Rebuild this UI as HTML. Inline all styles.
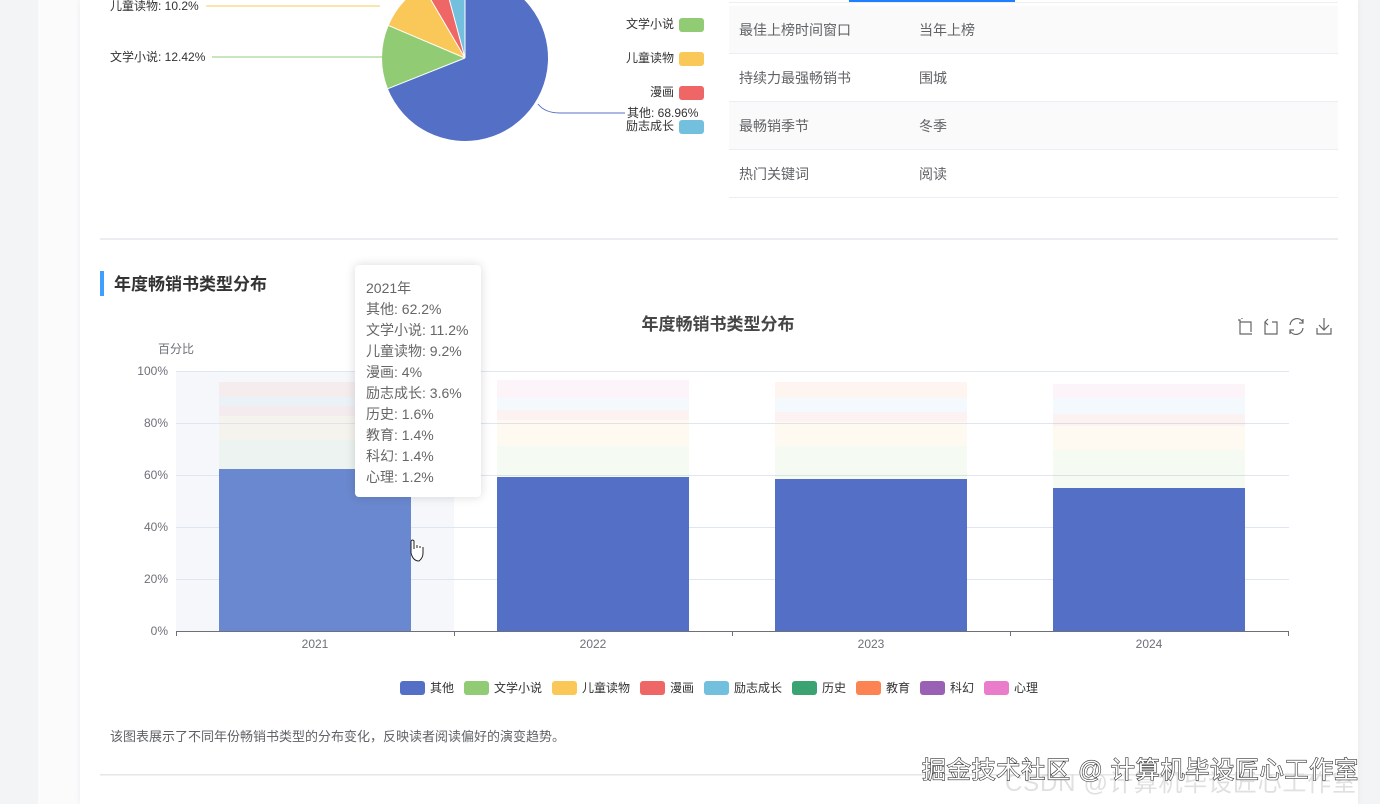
<!DOCTYPE html>
<html><head><meta charset="utf-8"><style>
html,body{margin:0;padding:0;width:1380px;height:804px;overflow:hidden;background:#f3f4f6;font-family:"Liberation Sans","Noto Sans CJK SC",sans-serif;}
.wrap{position:absolute;left:38px;top:0;width:1320px;height:804px;background:#fbfbfc;}
.card{position:absolute;left:80px;top:0;width:1278px;height:804px;background:#fff;box-shadow:0 0 6px rgba(0,0,0,.06);}
.tip{position:absolute;left:355px;top:265px;width:126px;height:232px;background:#fff;border-radius:4px;box-shadow:0 0 10px rgba(0,0,0,.15);box-sizing:border-box;padding:13px 0 0 11px;font-size:14px;line-height:21px;color:#666;}
</style></head><body>
<div class="wrap"></div>
<div class="card"></div>
<svg width="1380" height="804" style="position:absolute;left:0;top:0" font-family="Liberation Sans, Noto Sans CJK SC, sans-serif">
<path d="M465,58 L465,-25 A83,83 0 1,1 387.9,88.7 Z" fill="#5470c6"/>
<path d="M465,58 L387.9,88.7 A83,83 0 0,1 388.6,25.6 Z" fill="#91cc75"/>
<path d="M465,58 L388.6,25.6 A83,83 0 0,1 423,-13.6 Z" fill="#fac858"/>
<path d="M465,58 L423,-13.6 A83,83 0 0,1 443.5,-22 Z" fill="#ee6666"/>
<path d="M465,58 L443.5,-22 A83,83 0 0,1 465,-25 Z" fill="#73c0de"/>
<path d="M465,58 L465,-25 M465,58 L387.9,88.7 M465,58 L388.6,25.6 M465,58 L423,-13.6 M465,58 L443.5,-22" stroke="#fff" stroke-width="1"/>
<path d="M206,6 L380,6" stroke="#fac858" fill="none"/>
<path d="M212,57 L383,57" stroke="#91cc75" fill="none"/>
<path d="M538,104 Q545,113 560,113 L625,113" stroke="#5470c6" fill="none"/>
<g font-size="12" fill="#333">
<text x="110" y="10">儿童读物: 10.2%</text>
<text x="110" y="61">文学小说: 12.42%</text>
<text x="627" y="117">其他: 68.96%</text>
<text x="674" y="28" text-anchor="end">文学小说</text>
<text x="674" y="62" text-anchor="end">儿童读物</text>
<text x="674" y="96" text-anchor="end">漫画</text>
<text x="674" y="130" text-anchor="end">励志成长</text>
</g>
<rect x="679" y="18" width="25" height="14" rx="3" fill="#91cc75"/>
<rect x="679" y="52" width="25" height="14" rx="3" fill="#fac858"/>
<rect x="679" y="86" width="25" height="14" rx="3" fill="#ee6666"/>
<rect x="679" y="120" width="25" height="14" rx="3" fill="#73c0de"/>
<rect x="849" y="0" width="166" height="2" fill="#1e80ff"/>
<rect x="729" y="2" width="609" height="1" fill="#eee"/>
<rect x="729" y="6" width="609" height="48" fill="#fafafa"/>
<rect x="729" y="102" width="609" height="48" fill="#fafafa"/>
<g fill="#ebeef5"><rect x="729" y="53" width="609" height="1"/><rect x="729" y="101" width="609" height="1"/><rect x="729" y="149" width="609" height="1"/><rect x="729" y="197" width="609" height="1"/></g>
<g font-size="14" fill="#606266">
<text x="739" y="35">最佳上榜时间窗口</text><text x="919" y="35">当年上榜</text>
<text x="739" y="83">持续力最强畅销书</text><text x="919" y="83">围城</text>
<text x="739" y="131">最畅销季节</text><text x="919" y="131">冬季</text>
<text x="739" y="179">热门关键词</text><text x="919" y="179">阅读</text>
</g>
<rect x="100" y="238" width="1238" height="2" fill="#ebedf0"/>
<rect x="100" y="271" width="4" height="25" fill="#409eff"/>
<text x="114" y="290" font-size="17" font-weight="bold" fill="#333">年度畅销书类型分布</text>
<text x="718" y="330" font-size="17" font-weight="bold" fill="#464646" text-anchor="middle">年度畅销书类型分布</text>
<text x="158" y="353" font-size="12" fill="#6e7079">百分比</text>
<g stroke="#666" fill="none" stroke-width="1.2">
<path d="M1238,320 L1240,320 L1240,334 L1252,334 M1240,322 L1251,322 L1251,332 M1242,319 L1242,318"/>
<path d="M1265,322 L1265,334 L1277,334 L1277,322 L1272,322 M1268,319 L1265,322 L1268,325"/>
<path d="M1303,322 A7,7 0 0,0 1290,325 M1290,331 A7,7 0 0,0 1303,328 M1303,319 L1303,323 L1299,323 M1290,334 L1290,330 L1294,330"/>
<path d="M1324,318 L1324,330 M1319,325 L1324,330 L1329,325 M1317,328 L1317,334 L1331,334 L1331,328"/>
</g>
<rect x="176" y="371" width="278" height="260" fill="#eef1f8" opacity=".6"/>
<g fill="#e0e6f1"><rect x="176" y="371" width="1113" height="1"/><rect x="176" y="423" width="1113" height="1"/><rect x="176" y="475" width="1113" height="1"/><rect x="176" y="527" width="1113" height="1"/><rect x="176" y="579" width="1113" height="1"/></g>
<g font-size="12" fill="#6e7079" text-anchor="end">
<text x="168" y="375">100%</text><text x="168" y="427">80%</text><text x="168" y="479">60%</text><text x="168" y="531">40%</text><text x="168" y="583">20%</text><text x="168" y="635">0%</text>
</g>
<g opacity=".08">
<rect x="219" y="440" width="192" height="29" fill="#91cc75"/><rect x="219" y="416" width="192" height="24" fill="#fac858"/><rect x="219" y="406" width="192" height="10" fill="#ee6666"/><rect x="219" y="397" width="192" height="9" fill="#73c0de"/><rect x="219" y="382" width="192" height="15" fill="#fc8452"/>
<rect x="497" y="446" width="192" height="31" fill="#91cc75"/><rect x="497" y="420" width="192" height="26" fill="#fac858"/><rect x="497" y="410" width="192" height="10" fill="#ee6666"/><rect x="497" y="398" width="192" height="12" fill="#73c0de"/><rect x="497" y="380" width="192" height="18" fill="#ea7ccc"/>
<rect x="775" y="446" width="192" height="33" fill="#91cc75"/><rect x="775" y="422" width="192" height="24" fill="#fac858"/><rect x="775" y="412" width="192" height="10" fill="#ee6666"/><rect x="775" y="398" width="192" height="14" fill="#73c0de"/><rect x="775" y="382" width="192" height="16" fill="#fc8452"/>
<rect x="1053" y="450" width="192" height="38" fill="#91cc75"/><rect x="1053" y="426" width="192" height="24" fill="#fac858"/><rect x="1053" y="414" width="192" height="12" fill="#ee6666"/><rect x="1053" y="398" width="192" height="16" fill="#73c0de"/><rect x="1053" y="384" width="192" height="14" fill="#ea7ccc"/>
</g>
<rect x="219" y="469" width="192" height="162" fill="#6a88cf"/>
<rect x="497" y="477" width="192" height="154" fill="#5470c6"/>
<rect x="775" y="479" width="192" height="152" fill="#5470c6"/>
<rect x="1053" y="488" width="192" height="143" fill="#5470c6"/>
<g stroke="#6e7079"><path d="M176,631.5 L1289,631.5 M176.5,631 L176.5,636 M454.5,631 L454.5,636 M732.5,631 L732.5,636 M1010.5,631 L1010.5,636 M1288.5,631 L1288.5,636"/></g>
<g font-size="12" fill="#6e7079" text-anchor="middle"><text x="315" y="648">2021</text><text x="593" y="648">2022</text><text x="871" y="648">2023</text><text x="1149" y="648">2024</text></g>
<path d="M411,541 L411,553 Q413,561 419,561 Q423,558 423,553 L423,547 M414,549 L414,541 Q412.5,539 411,541 M417,548 L417,545 M420,548 L420,546" stroke="#222" fill="#fff" stroke-width="1"/>
<g font-size="12" fill="#333">
<rect x="400" y="681" width="25" height="14" rx="3" fill="#5470c6"/><text x="430" y="692">其他</text>
<rect x="464" y="681" width="25" height="14" rx="3" fill="#91cc75"/><text x="494" y="692">文学小说</text>
<rect x="552" y="681" width="25" height="14" rx="3" fill="#fac858"/><text x="582" y="692">儿童读物</text>
<rect x="640" y="681" width="25" height="14" rx="3" fill="#ee6666"/><text x="670" y="692">漫画</text>
<rect x="704" y="681" width="25" height="14" rx="3" fill="#73c0de"/><text x="734" y="692">励志成长</text>
<rect x="792" y="681" width="25" height="14" rx="3" fill="#3ba272"/><text x="822" y="692">历史</text>
<rect x="856" y="681" width="25" height="14" rx="3" fill="#fc8452"/><text x="886" y="692">教育</text>
<rect x="920" y="681" width="25" height="14" rx="3" fill="#9a60b4"/><text x="950" y="692">科幻</text>
<rect x="984" y="681" width="25" height="14" rx="3" fill="#ea7ccc"/><text x="1014" y="692">心理</text>
</g>
<text x="110" y="741" font-size="13" fill="#606266">该图表展示了不同年份畅销书类型的分布变化，反映读者阅读偏好的演变趋势。</text>
<rect x="100" y="774" width="1238" height="1.5" fill="#e4e6ea"/>
<text x="1005" y="791" font-size="24" fill="#ddd" letter-spacing="0.8" opacity=".9">CSDN @计算机毕设匠心工作室</text>
<text x="922" y="778" font-size="24" fill="#fff" stroke="#333" stroke-width="1.2" paint-order="stroke" letter-spacing="0.8">掘金技术社区 @ 计算机毕设匠心工作室</text>
</svg>
<div class="tip">2021年<br>其他: 62.2%<br>文学小说: 11.2%<br>儿童读物: 9.2%<br>漫画: 4%<br>励志成长: 3.6%<br>历史: 1.6%<br>教育: 1.4%<br>科幻: 1.4%<br>心理: 1.2%</div>
</body></html>
